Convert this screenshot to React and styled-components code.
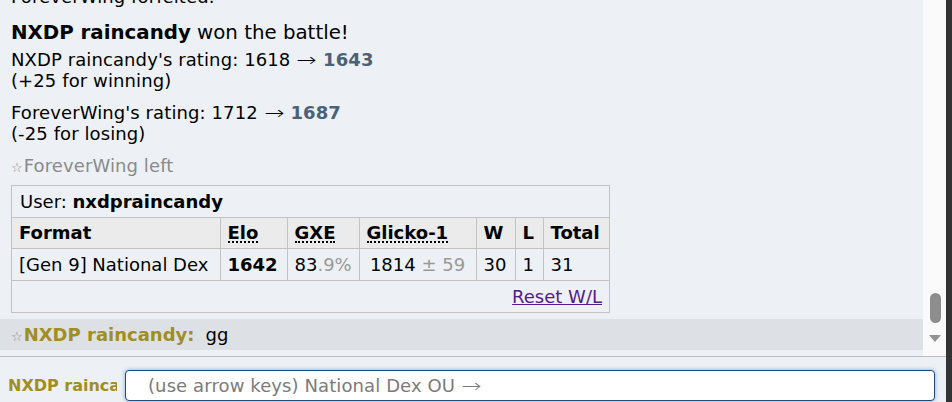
import React from "react";
import styled, { createGlobalStyle } from "styled-components";

const GlobalStyle = createGlobalStyle`
  html, body {
    margin: 0;
    padding: 0;
    width: 952px;
    height: 402px;
    overflow: hidden;
    background: #333;
  }
  body {
    font-family: "DejaVu Sans", Verdana, sans-serif;
    font-size: 18px;
    color: #000;
  }
`;

const Frame = styled.div`
  display: flex;
  width: 952px;
  height: 402px;
`;

const Room = styled.div`
  width: 946px;
  display: flex;
  flex-direction: column;
  background: #edf1f5;
`;

const LogArea = styled.div`
  flex: 1;
  display: flex;
  min-height: 0;
`;

const Log = styled.div`
  flex: 1;
  display: flex;
  flex-direction: column;
  justify-content: flex-end;
  overflow: hidden;
  padding-bottom: 6px;
  letter-spacing: 0.1px;
`;

const Scrollbar = styled.div`
  width: 23px;
  background: #fafafa;
  display: flex;
  flex-direction: column;
  justify-content: flex-end;
  align-items: center;
  padding-bottom: 14px;
  gap: 12px;
`;

const Thumb = styled.div`
  width: 11px;
  height: 30px;
  border-radius: 6px;
  background: #8d8d8d;
  margin-left: 1px;
`;

const Arrow = styled.div`
  width: 0;
  height: 0;
  border-left: 6px solid transparent;
  border-right: 6px solid transparent;
  border-top: 7px solid #939393;
  margin-left: 1px;
`;

const RightArrow = styled.span`
  display: inline-block;
  transform: scaleX(1.35);
  margin: 0 3px;
  letter-spacing: 0;
  font-weight: 300;
`;

const Line = styled.div`
  padding: 0 11px;
  line-height: 21px;
  white-space: nowrap;
`;

const Block = styled.div`
  padding: 0 11px;
  margin-top: ${({ $gap }) => $gap || 0}px;
  line-height: 21px;
  white-space: nowrap;
`;

const Heading = styled.div`
  padding: 0 11px;
  margin: 12px 0 3px;
  font-size: 19.8px;
  letter-spacing: 0;
  line-height: 27px;
  white-space: nowrap;
`;

const Rating = styled.strong`
  color: #4b6177;
`;

const Leave = styled.div`
  padding: 0 11px;
  margin-top: 11px;
  line-height: 21px;
  color: #8a8a8a;
`;

const Star = styled.span`
  font-size: 13px;
  color: #8a8a8a;
  margin-right: 1px;
`;

const StatsBox = styled.div`
  margin: 7px 0 0 11px;
  width: 599px;
  border: 1px solid #c3c3c3;
  box-sizing: border-box;
  letter-spacing: 0;
`;

const UserRow = styled.div`
  height: 31px;
  line-height: 31px;
  padding-left: 8px;
  border-bottom: 1px solid #c3c3c3;
`;

const Table = styled.table`
  border-collapse: collapse;
  width: 100%;
  table-layout: fixed;
`;

const Th = styled.th`
  background: #ebebeb;
  font-weight: bold;
  text-align: left;
  height: 31px;
  padding: 0 7px;
  border-right: 1px solid #c3c3c3;
  border-bottom: 1px solid #c3c3c3;
  width: ${({ $w }) => $w}px;
  box-sizing: border-box;
  white-space: nowrap;
  &:last-child {
    border-right: none;
  }
`;

const Abbr = styled.span`
  border-bottom: 2px dotted #000;
  line-height: 17px;
  display: inline-block;
`;

const Td = styled.td`
  height: 31px;
  padding: 0 7px;
  border-right: 1px solid #c3c3c3;
  border-bottom: 1px solid #c3c3c3;
  text-align: ${({ $center }) => ($center ? "center" : "left")};
  font-weight: ${({ $bold }) => ($bold ? "bold" : "normal")};
  white-space: nowrap;
  overflow: hidden;
  &:last-child {
    border-right: none;
  }
`;

const Dim = styled.span`
  color: #999;
`;

const ResetRow = styled.div`
  height: 31px;
  line-height: 31px;
  text-align: right;
  padding-right: 7px;
`;

const ResetLink = styled.a`
  color: #551a8b;
  text-decoration: underline;
  cursor: pointer;
`;

const ChatRow = styled.div`
  margin-top: 6px;
  background: #dde1e5;
  height: 31px;
  line-height: 31px;
  padding-left: 11px;
  white-space: nowrap;
  letter-spacing: 0;
`;

const Name = styled.strong`
  color: #a18e1f;
  margin-right: 11px;
`;

const Compose = styled.div`
  height: 44px;
  border-top: 1px solid #b9bcbf;
  display: flex;
  align-items: flex-end;
  padding: 0 11px 1px 8px;
  gap: 8px;
`;

const ComposeName = styled.div`
  width: 109px;
  overflow: hidden;
  white-space: nowrap;
  color: #a18e1f;
  font-weight: bold;
  font-size: 16px;
  line-height: 31px;
  align-self: center;
  margin-top: 12px;
`;

const Input = styled.div`
  flex: 1;
  height: 29px;
  border: 1.5px solid #1c4c82;
  border-radius: 4px;
  background: #fff;
  box-shadow: 0 0 4px rgba(60, 120, 200, 0.6);
  color: #7b7b7b;
  line-height: 29px;
  padding-left: 22px;
  white-space: nowrap;
  letter-spacing: 0.1px;
`;

const Edge = styled.div`
  width: 6px;
  background: #333;
`;

export default function App() {
  return (
    <>
      <GlobalStyle />
      <Frame>
        <Room>
          <LogArea>
            <Log>
              <Line>ForeverWing forfeited.</Line>
              <Heading>
                <strong>NXDP raincandy</strong> won the battle!
              </Heading>
              <Block>
                NXDP raincandy's rating: 1618 <RightArrow>→</RightArrow> <Rating>1643</Rating>
                <br />
                (+25 for winning)
              </Block>
              <Block $gap={11}>
                ForeverWing's rating: 1712 <RightArrow>→</RightArrow> <Rating>1687</Rating>
                <br />
                (-25 for losing)
              </Block>
              <Leave>
                <Star>☆</Star>ForeverWing left
              </Leave>
              <StatsBox>
                <UserRow>
                  User: <strong>nxdpraincandy</strong>
                </UserRow>
                <Table>
                  <thead>
                    <tr>
                      <Th $w={208}>Format</Th>
                      <Th $w={67}>
                        <Abbr>Elo</Abbr>
                      </Th>
                      <Th $w={72}>
                        <Abbr>GXE</Abbr>
                      </Th>
                      <Th $w={117}>
                        <Abbr>Glicko-1</Abbr>
                      </Th>
                      <Th $w={39}>W</Th>
                      <Th $w={28}>L</Th>
                      <Th>Total</Th>
                    </tr>
                  </thead>
                  <tbody>
                    <tr>
                      <Td>[Gen 9] National Dex</Td>
                      <Td $bold>1642</Td>
                      <Td>
                        83<Dim>.9%</Dim>
                      </Td>
                      <Td $center>
                        1814 <Dim>± 59</Dim>
                      </Td>
                      <Td>30</Td>
                      <Td>1</Td>
                      <Td>31</Td>
                    </tr>
                  </tbody>
                </Table>
                <ResetRow>
                  <ResetLink>Reset W/L</ResetLink>
                </ResetRow>
              </StatsBox>
              <ChatRow>
                <Star>☆</Star>
                <Name>NXDP raincandy:</Name>
                gg
              </ChatRow>
            </Log>
            <Scrollbar>
              <Thumb />
              <Arrow />
            </Scrollbar>
          </LogArea>
          <Compose>
            <ComposeName>NXDP raincandy</ComposeName>
            <Input>
              (use arrow keys) National Dex OU <RightArrow>→</RightArrow>
            </Input>
          </Compose>
        </Room>
        <Edge />
      </Frame>
    </>
  );
}
